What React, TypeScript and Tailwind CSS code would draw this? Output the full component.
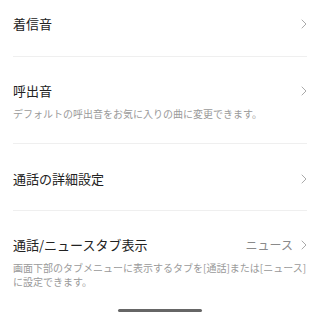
import React from "react";

const Chevron = () => (
  <svg width="6" height="10" viewBox="0 0 6 10" fill="none" className="shrink-0">
    <path d="M1 1l4 4-4 4" stroke="#aaaaaa" strokeWidth="1" strokeLinecap="round" strokeLinejoin="round" />
  </svg>
);

const font = {
  fontFamily: '"Noto Sans CJK JP", "Noto Sans", sans-serif',
};

export default function App() {
  return (
    <div className="w-[320px] h-[320px] bg-white flex flex-col overflow-hidden" style={font}>
      <div className="px-[13px]">
        {/* 着信音 */}
        <div className="pt-[16px] pb-[24px] border-b border-[#efefef]">
          <div className="flex items-center justify-between h-[16px]">
            <span className="text-[13px] leading-[16px] text-[#222]">着信音</span>
            <Chevron />
          </div>
        </div>

        {/* 呼出音 */}
        <div className="pt-[26px] pb-[22px] border-b border-[#efefef]">
          <div className="flex items-center justify-between h-[16px]">
            <span className="text-[13px] leading-[16px] text-[#222]">呼出音</span>
            <Chevron />
          </div>
          <p className="mt-[8px] text-[10px] leading-[14px] text-[#9a9a9a] whitespace-nowrap">
            デフォルトの呼出音をお気に入りの曲に変更できます。
          </p>
        </div>

        {/* 通話の詳細設定 */}
        <div className="pt-[27px] pb-[23px] border-b border-[#efefef]">
          <div className="flex items-center justify-between h-[16px]">
            <span className="text-[13px] leading-[16px] text-[#222]">通話の詳細設定</span>
            <Chevron />
          </div>
        </div>

        {/* 通話/ニュースタブ表示 */}
        <div className="pt-[26px]">
          <div className="flex items-center justify-between h-[16px]">
            <span className="text-[13px] leading-[16px] text-[#222]">通話/ニュースタブ表示</span>
            <div className="flex items-center gap-[8px]">
              <span className="text-[12px] leading-[16px] text-[#8a8a8a]">ニュース</span>
              <Chevron />
            </div>
          </div>
          <p className="mt-[8px] text-[10px] leading-[14px] text-[#9a9a9a]">
            <span className="block whitespace-nowrap">画面下部のタブメニューに表示するタブを[通話]または[ニュース]</span>
            <span className="block whitespace-nowrap">に設定できます。</span>
          </p>
        </div>
      </div>

      <div className="mt-auto mb-[8px] flex justify-center">
        <div className="w-[84px] h-[3px] rounded-full bg-[#666]" />
      </div>
    </div>
  );
}
